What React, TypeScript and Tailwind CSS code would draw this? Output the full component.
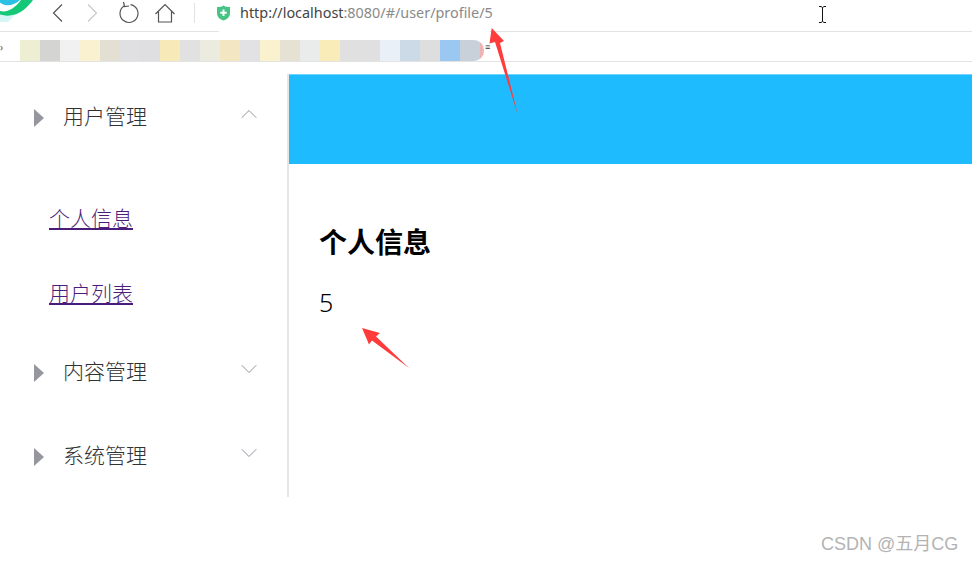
import { ChevronDown, ChevronUp } from 'lucide-react';

const CJK = `font-['Noto_Sans_CJK_SC','Noto_Sans',sans-serif]`;

const swatches = [
  'bg-[#eeeed2]', 'bg-[#d4d4d2]', 'bg-[#f1f1f1]', 'bg-[#f9f1cf]', 'bg-[#e3dfd2]', 'bg-[#e0e0e2]',
  'bg-[#dfdfe1]', 'bg-[#f8e9b8]', 'bg-[#e1e1e1]', 'bg-[#ecebdf]', 'bg-[#f3e7c3]', 'bg-[#e2e2e4]',
  'bg-[#faf1cf]', 'bg-[#e6e2d3]', 'bg-[#eaebeb]', 'bg-[#f9ecb8]', 'bg-[#e0e0e0]', 'bg-[#e0e0e0]',
  'bg-[#e9f0f8]', 'bg-[#ccd9e6]', 'bg-[#dedede]', 'bg-[#9bc8f0]',
];

function Toolbar() {
  return (
    <div className="flex h-[32px] items-center border-b border-[#e3e3e3] bg-white">
      <svg width="40" height="31" viewBox="0 0 40 31" className="shrink-0">
        <path d="M0 14 L16 14 L8 22 L0 22 Z" fill="#d6f5f5" />
        <path d="M0 0 H20 C16 4 10 6 5 5 C3 4.500 1 3.500 0 2.500 Z" fill="#2cc0e6" />
        <path d="M21 0 H33 C28 7 22 12 15 14.500 C10 16 5 16 0 14.500 V11 C8 13 15 8 21 0 Z" fill="#14c878" />
      </svg>
      <svg width="24" height="24" viewBox="0 0 24 24" className="-mt-[8px] ml-[6px] shrink-0" fill="none" stroke="#555" strokeWidth="1.2">
        <path d="M16 4.500 L7.500 13 L16 21.500" />
      </svg>
      <svg width="24" height="24" viewBox="0 0 24 24" className="-mt-[8px] ml-[10px] shrink-0" fill="none" stroke="#c9c9c9" strokeWidth="1.2">
        <path d="M8 4.500 L16.500 13 L8 21.500" />
      </svg>
      <svg width="24" height="24" viewBox="0 0 24 24" className="-mt-[8px] ml-[13px] shrink-0" fill="none" stroke="#555" strokeWidth="1.2">
        <path d="M7 6 A9 9 0 1 0 13.500 4.600 M6.500 2 L7.500 6.500 L12 6" />
      </svg>
      <svg width="24" height="24" viewBox="0 0 24 24" className="-mt-[8px] ml-[12px] shrink-0" fill="none" stroke="#555" strokeWidth="1.2">
        <path d="M2.500 14 L12 4.500 L21.500 14 M5.500 11.500 V22 H18.500 V11.500" />
      </svg>
      <div className="-mt-[6px] ml-[17px] h-[20px] w-px shrink-0 bg-[#e2e2e2]" />
      <div className="relative z-10 -mb-px ml-[24px] flex h-[32px] w-[271px] shrink-0 items-center gap-[9px] bg-white pb-[6px]">
        <svg width="15" height="16" viewBox="0 0 15 16" className="-ml-[3px] shrink-0">
          <path d="M1 2 C4 2 6 1.500 7.500 0.500 C9 1.500 11 2 14 2 V8 C14 12 11 14.500 7.500 15.500 C4 14.500 1 12 1 8 Z" fill="#45c486" />
          <path d="M7.500 4.500 V11 M4.300 7.800 H10.700" stroke="#fff" strokeWidth="2" />
        </svg>
        <span className="font-['Noto_Sans',sans-serif] text-[14.4px] leading-none whitespace-nowrap text-[#8a8a8a]">
          <span className="text-[#444]">http://localhost</span>:8080/#/user/profile/5
        </span>
      </div>
      <svg width="10" height="18" viewBox="0 0 10 18" className="-mt-[1px] ml-[327px] shrink-0" fill="none" stroke="#111" strokeWidth="1">
        <path d="M2 0.500 H4 L5.500 1.500 L7 0.500 H9 M5.500 1.500 V15.500 M2 16.500 H4 L5.500 15.500 L7 16.500 H9" />
      </svg>
    </div>
  );
}

function Bookmarks() {
  return (
    <div className="flex h-[30px] items-end border-b border-[#e3e3e3] bg-white">
      <span className="mb-[9px] w-[20px] font-['Noto_Sans',sans-serif] text-[10px] leading-none text-[#555]">›</span>
      <div className="flex">
        {swatches.map((color, i) => (
          <div key={i} className={`h-[21px] w-[20px] ${color}`} />
        ))}
      </div>
      <div className="h-[21px] w-[24px] rounded-r-[10px] bg-[linear-gradient(to_right,#c8d0da_0,#c8d0da_20px,#eeb4b4_20px)]" />
      <span className="mb-[10px] ml-px font-['Noto_Sans',sans-serif] text-[9px] leading-none text-[#333]">≡</span>
    </div>
  );
}

function MenuHeader({ label, open }: { label: string; open?: boolean }) {
  return (
    <div className="flex h-[84px] items-center pr-[24px] pl-[34px]">
      <span className="mt-[3px] h-0 w-0 border-y-[9px] border-l-[10px] border-y-transparent border-l-[#96969e]" />
      <span className={`${CJK} ml-[19px] flex-1 text-[21px] font-light text-[#303133]`}>{label}</span>
      {open ? (
        <ChevronUp size={28} strokeWidth={0.85} className="-mt-[4px] text-[#909399]" />
      ) : (
        <ChevronDown size={28} strokeWidth={0.85} className="-mt-[4px] text-[#909399]" />
      )}
    </div>
  );
}

function SubLink({ label }: { label: string }) {
  return (
    <div className="flex h-[76px] items-center pl-[49px]">
      <a href="#" className={`${CJK} text-[21px] font-light text-[#4b1d7a] underline`}>
        {label}
      </a>
    </div>
  );
}

function Sidebar() {
  return (
    <aside className="h-[423px] w-[289px] shrink-0 border-r-2 border-[#e6e6e6]">
      <MenuHeader label="用户管理" open />
      <div className="h-[171px] pt-[22px]">
        <SubLink label="个人信息" />
        <div className="-mt-px">
          <SubLink label="用户列表" />
        </div>
      </div>
      <MenuHeader label="内容管理" />
      <MenuHeader label="系统管理" />
    </aside>
  );
}

export default function App() {
  return (
    <div className="relative h-[563px] w-[972px] overflow-hidden bg-white">
      <Toolbar />
      <Bookmarks />
      <div className="mt-[12px] flex">
        <Sidebar />
        <main className="flex-1">
          <div className="h-[90px] border-t border-[#6fd4ff] bg-[#1ebcff]" />
          <section className="pt-[57px] pl-[30px]">
            <h2 className={`${CJK} text-[28px] leading-[40px] font-bold text-black`}>个人信息</h2>
            <p className="mt-[25px] font-['Noto_Sans',sans-serif] text-[25px] leading-[32px] font-light text-black">5</p>
          </section>
        </main>
      </div>

      {/* red annotation arrows */}
      <svg width="40" height="100" viewBox="485 22 40 100" className="absolute top-[22px] left-[485px]">
        <polygon points="491.700,28 504,41 500,43 518,115.500 495,42 489.500,43.500" fill="#ff3b3b" />
      </svg>
      <svg width="60" height="50" viewBox="355 322 60 50" className="absolute top-[322px] left-[355px]">
        <polygon points="362,328 380,333 376,336.500 409,368 372,340.500 369,344.500" fill="#ff3b3b" />
      </svg>

      <span className={`absolute top-[532px] left-[821px] font-['Liberation_Sans','Noto_Sans_CJK_SC',sans-serif] text-[18px] leading-6 whitespace-nowrap text-[#b3b3b3]`}>
        CSDN @五月CG
      </span>
    </div>
  );
}
